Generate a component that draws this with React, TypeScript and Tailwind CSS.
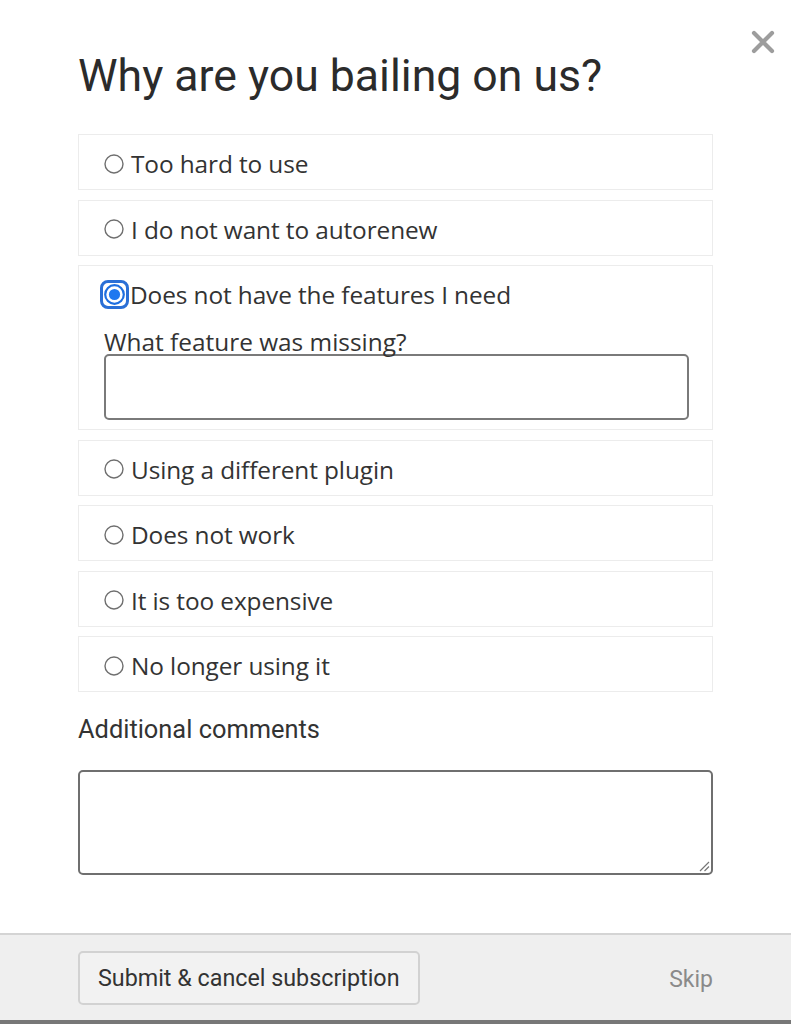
import React from "react";

const reasons = [
    "Too hard to use",
    "I do not want to autorenew",
    "Does not have the features I need",
    "Using a different plugin",
    "Does not work",
    "It is too expensive",
    "No longer using it",
];

const Radio: React.FC<{ checked?: boolean }> = ({ checked }) => {
    if (checked) {
        return (
            <span className="-ml-[4px] -mr-[5px] flex h-[29px] w-[29px] shrink-0 items-center justify-center rounded-[8px] border-[3px] border-[#2a6fd6]">
                <svg width="21" height="21" viewBox="0 0 21 21">
                    <circle cx="10.5" cy="10.5" r="9.3" fill="#fff" stroke="#1f6fe0" strokeWidth="2.2" />
                    <circle cx="10.5" cy="10.5" r="5.6" fill="#1f78f0" />
                </svg>
            </span>
        );
    }
    return (
        <span className="flex h-[27px] w-[21px] shrink-0 items-center">
            <svg width="20" height="20" viewBox="0 0 20 20">
                <circle cx="10" cy="10" r="9" fill="#fff" stroke="#6f6f6f" strokeWidth="1.4" />
            </svg>
        </span>
    );
};

export default function App() {
    return (
        <div className="relative flex h-[1024px] w-[791px] flex-col bg-white text-[#333]" style={{ fontFamily: "'Open Sans', 'Noto Sans', sans-serif" }}>
            <button className="absolute left-[751px] top-[30px] text-[#9d9d9d]">
                <svg width="24" height="24" viewBox="0 0 24 24">
                    <path d="M3 3l18 18M21 3L3 21" stroke="currentColor" strokeWidth="4.2" strokeLinecap="round" />
                </svg>
            </button>

            <div className="flex flex-col px-[78px] pt-[51px]">
                <h1 className="mb-[33px] font-['Roboto'] text-[44.6px] leading-[50px] text-[#2b2b2b]">
                    Why are you bailing on us?
                </h1>

                <div className="flex flex-col gap-[9.5px]">
                    {reasons.map((r, i) => (
                        <div key={r} className="border border-[#ececec] bg-white pl-[25px] pr-[24px]">
                            <div className="flex h-[54px] items-center gap-[6px] pt-[3px]">
                                <Radio checked={i === 2} />
                                <span className="pt-[2px] text-[24.4px] tracking-[-0.1px] text-[#333]">{r}</span>
                            </div>
                            {i === 2 && (
                                <div className="pb-[9px]">
                                    <div className="mt-[10px] text-[24.4px] leading-[24px] text-[#333]">What feature was missing?</div>
                                    <div className="h-[66px] w-[585px] rounded-[5px] border-2 border-[#7a7a7a] bg-white" />
                                </div>
                            )}
                        </div>
                    ))}
                </div>

                <div className="mt-[22px] font-['Roboto'] text-[25.4px] leading-[30px] text-[#333]">Additional comments</div>
                <div className="relative mt-[26px] h-[105px] w-[635px] rounded-[5px] border-2 border-[#6f6f6f] bg-white">
                    <svg className="absolute bottom-[1px] right-[1px]" width="13" height="13" viewBox="0 0 13 13">
                        <path d="M12 3L3 12M12 7.5L7.5 12" stroke="#777" strokeWidth="1.2" />
                    </svg>
                </div>
            </div>

            <div className="mt-auto flex h-[91px] items-start justify-between border-t-2 border-b-[4px] border-t-[#d4d4d4] border-b-[#777] bg-[#efefef] pl-[78px] pr-[78px] pt-[16px]">
                <button className="h-[54px] rounded-[5px] border-2 border-[#d2d2d2] bg-[#f2f2f2] px-[18px] font-['Roboto'] text-[23.3px] text-[#333]">
                    Submit &amp; cancel subscription
                </button>
                <span className="mt-[12px] font-['Roboto'] text-[23px] text-[#8a8a8a]">Skip</span>
            </div>
        </div>
    );
}
